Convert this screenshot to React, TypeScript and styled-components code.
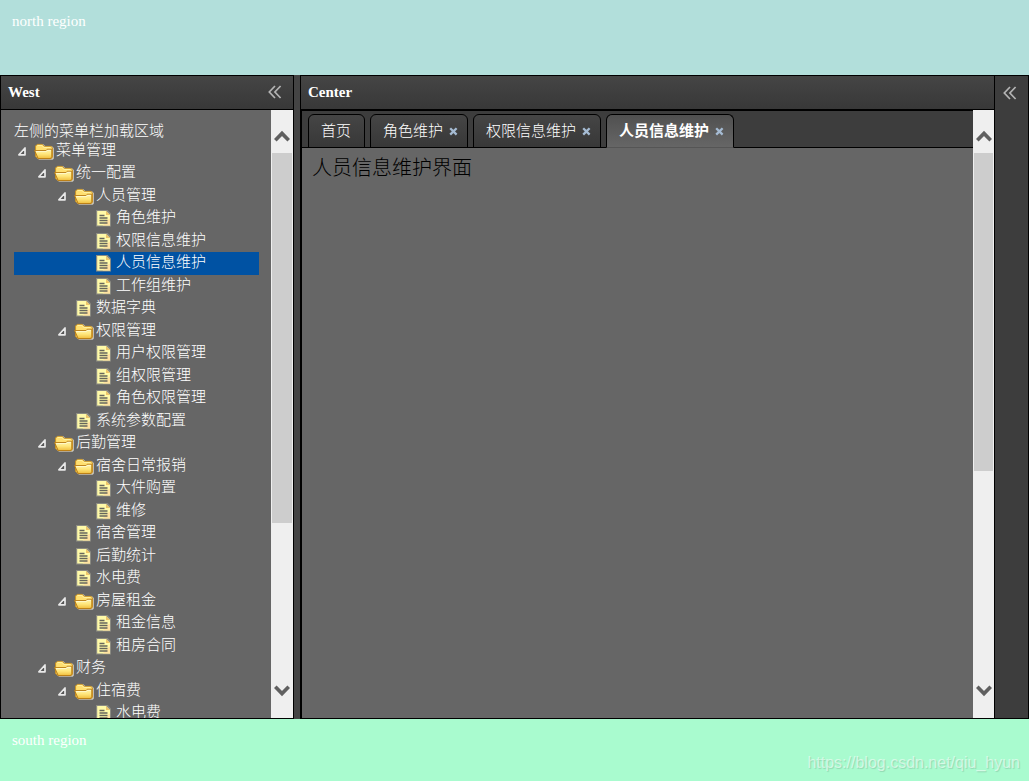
import React from "react";
import styled, { createGlobalStyle, css } from "styled-components";

const GlobalStyle = createGlobalStyle`
  * { box-sizing: border-box; }
  body {
    margin: 0;
    overflow: hidden;
    font-family: "Liberation Serif", "Noto Sans CJK SC", serif;
    font-size: 15px;
    font-weight: 300;
    color: #fff;
  }
  button {
    border: 0;
    padding: 0;
    background: none;
    font: inherit;
    color: inherit;
    cursor: pointer;
  }
`;

const Page = styled.div`
  display: grid;
  grid-template-rows: 75px minmax(0, 1fr) 62px;
  height: 100vh;
  background: #444;
`;

const North = styled.header`
  padding: 12px;
  line-height: 18px;
  background: #b2dfdb;
`;

const South = styled.footer`
  display: flex;
  justify-content: space-between;
  padding: 12px 9px 9px 12px;
  line-height: 18px;
  background: #a9fbcf;
`;

const Watermark = styled.span`
  align-self: flex-end;
  font-family: "Liberation Sans", Arial, sans-serif;
  font-size: 16px;
  color: rgba(255, 255, 255, 0.55);
  text-shadow: 1px 1px 1px rgba(0, 0, 0, 0.14);
`;

const Middle = styled.div`
  display: grid;
  grid-template-columns: 294px minmax(0, 1fr) 34px;
  min-height: 0;
`;

const Panel = styled.section`
  display: flex;
  flex-direction: column;
  min-width: 0;
  min-height: 0;
  border: 1px solid #000;
  background: #666;
`;

const CenterPanel = styled(Panel)`
  margin-left: 6px;
`;

const EastPanel = styled.aside`
  display: flex;
  justify-content: center;
  align-items: flex-start;
  padding: 10px 3px 0 0;
  border: 1px solid #000;
  border-left: 0;
  background: #3d3d3d;
`;

const PanelHeader = styled.div`
  display: flex;
  flex: none;
  align-items: center;
  justify-content: space-between;
  height: 34px;
  padding: 0 11px 1px 7px;
  border-bottom: 1px solid #000;
  background: linear-gradient(#454545, #383838);
`;

const PanelTitle = styled.h2`
  margin: 0;
  font-size: 15px;
  line-height: 20px;
`;

const ToolButton = styled.button`
  display: flex;
  width: 14px;
  height: 14px;
`;

const PanelBody = styled.div`
  display: flex;
  flex: 1;
  min-height: 0;
`;

const MenuArea = styled.nav`
  flex: 1;
  min-width: 0;
  padding: 12px 12px 0 13px;
  overflow: hidden;
`;

const MenuCaption = styled.div`
  line-height: 18px;
`;

const Tree = styled.ul`
  margin: 0;
  padding: 0;
  list-style: none;
`;

const TreeRow = styled.li<{ $level: number; $selected?: boolean }>`
  display: flex;
  align-items: flex-start;
  height: 22px;
  padding-left: ${(p) => p.$level * 20}px;
  line-height: 20px;
  white-space: nowrap;
  cursor: pointer;
  background: ${(p) => (p.$selected ? "#0052a3" : "transparent")};
  &:nth-child(even) {
    height: 23px;
  }
`;

const TreeSlot = styled.span`
  display: flex;
  flex: none;
  width: 20px;
  height: 22px;
`;

const TreeLabel = styled.span`
  padding-left: 2px;
`;

const Track = styled.div`
  display: flex;
  flex: none;
  flex-direction: column;
  width: 21px;
  background: #efefef;
`;

const WideTrack = styled(Track)`
  width: 22px;
`;

const Arrow = styled.svg`
  flex: none;
  align-self: center;
  width: 16px;
  height: 12px;
  margin: 20px 0 11px;
`;

const DownArrow = styled(Arrow)`
  margin: 11px 0 21px;
  transform: rotate(180deg);
`;

const Groove = styled.div`
  flex: 1;
  min-height: 0;
  padding: 0 1px;
`;

const Thumb = styled.div<{ $share: number }>`
  height: ${(p) => p.$share}%;
  background: #cdcdcd;
`;

const TabsPanel = styled.div`
  display: flex;
  flex: 1;
  flex-direction: column;
  min-width: 0;
  border-top: 1px solid #000;
  border-left: 1px solid #000;
`;

const TabBar = styled.div`
  display: flex;
  flex: none;
  align-items: flex-start;
  gap: 5px;
  height: 37px;
  padding: 3px 6px 0;
  border-bottom: 1px solid #000;
  background: #3d3d3d;
`;

const activeTab = css`
  font-weight: 700;
  border-bottom-color: #555;
  background: linear-gradient(#505050, #666);
`;

const Tab = styled.div<{ $active?: boolean; $closable?: boolean }>`
  display: flex;
  align-items: center;
  gap: 6px;
  height: 34px;
  padding: 0 ${(p) => (p.$closable ? 9 : 13)}px 3px 12px;
  border: 1px solid #000;
  border-radius: 6px 6px 0 0;
  white-space: nowrap;
  background: linear-gradient(#454545, #383838);
  ${(p) => p.$active && activeTab}
`;

const CloseButton = styled.button`
  display: flex;
  width: 9px;
  height: 9px;
  margin-top: 4px;
`;

const TabContent = styled.main`
  padding: 6px 10px;
  font-size: 20px;
  line-height: 28px;
  color: #000;
`;

const Collapse = () => (
  <svg width="14" height="14" viewBox="0 0 14 14" fill="none" stroke="#b4b4b4" strokeWidth="1.7" aria-hidden="true">
    <path d="M7 1 1.3 7 7 13M12.6 1 6.9 7l5.7 6" />
  </svg>
);

const Expander = () => (
  <svg width="20" height="22" viewBox="0 0 20 22" aria-hidden="true">
    <path d="M11 8v6.8H4.9z" fill="#555" stroke="#e9e9e9" strokeWidth="1.7" strokeLinejoin="round" />
  </svg>
);

const FolderIcon = () => (
  <svg width="20" height="22" viewBox="0 0 20 22" aria-hidden="true">
    <defs>
      <linearGradient id="folderFront" x1="0" y1="0" x2="0" y2="1">
        <stop offset="0" stopColor="#fff6b0" />
        <stop offset="0.5" stopColor="#ffe77c" />
        <stop offset="1" stopColor="#f0bd3c" />
      </linearGradient>
    </defs>
    <path d="M3 5.6 4.4 4.2h5l2 2h6.6l1.9 1.8v10.6l-1.2 1.2H5L3 18z" fill="#c9c4b8" />
    <path d="M1.6 6 3.2 4.4h5.2l1.8 2h6.8l1.4 1.3v9.6l-1.1 1.2H4.2l-2.6-2z" fill="#ffdf70" stroke="#c99223" strokeWidth="1" />
    <path d="M3.6 5.4h4.4l1.7 2h6.8" fill="none" stroke="#fff3a4" />
    <path d="M.6 10.6h11.3l1.3-1.3h4.6v7l-1 2.3H4.2z" fill="url(#folderFront)" stroke="#b97c15" strokeWidth="1" strokeLinejoin="round" />
    <path d="M2.1 11.6h10.2l1.3-1.3h3.1" fill="none" stroke="#fffbd0" />
  </svg>
);

const FileIcon = () => (
  <svg width="20" height="22" viewBox="0 0 20 22" aria-hidden="true">
    <path d="M2 3h11.6l3.4 3.5v13H2z" fill="#8b8b82" />
    <path d="M3.2 4h8.8l4 4v10.6H3.2z" fill="#fffaa8" />
    <path d="M13.4 13 16 11.4v7.2H8.6z" fill="#ffe2a0" />
    <path d="M12 4v4h4z" fill="#efc568" />
    <path d="M5.5 8.5h5M5.5 11h8M5.5 13.5h8M5.5 16h8" stroke="#66665c" strokeWidth="1.3" />
  </svg>
);

const CloseIcon = () => (
  <svg width="9" height="9" viewBox="0 0 9 9" aria-hidden="true">
    <path d="m1.2 1.2 6.4 6.4M7.6 1.2 1.2 7.6" stroke="#a5bbd3" strokeWidth="2.3" />
  </svg>
);

const Chevron = () => <path d="m1.3 10.2 6.7-6.8 6.7 6.8" fill="none" stroke="#606060" strokeWidth="3.6" />;

const ScrollMarks = ({ share, wide }: { share: number; wide?: boolean }) => {
  const Base = wide ? WideTrack : Track;
  return (
    <Base aria-hidden="true">
      <Arrow viewBox="0 0 16 12"><Chevron /></Arrow>
      <Groove><Thumb $share={share} /></Groove>
      <DownArrow viewBox="0 0 16 12"><Chevron /></DownArrow>
    </Base>
  );
};

type Node = { text: string; level: number; folder?: boolean };

const nodes: Node[] = [
  { text: "菜单管理", level: 0, folder: true },
  { text: "统一配置", level: 1, folder: true },
  { text: "人员管理", level: 2, folder: true },
  { text: "角色维护", level: 3 },
  { text: "权限信息维护", level: 3 },
  { text: "人员信息维护", level: 3 },
  { text: "工作组维护", level: 3 },
  { text: "数据字典", level: 2 },
  { text: "权限管理", level: 2, folder: true },
  { text: "用户权限管理", level: 3 },
  { text: "组权限管理", level: 3 },
  { text: "角色权限管理", level: 3 },
  { text: "系统参数配置", level: 2 },
  { text: "后勤管理", level: 1, folder: true },
  { text: "宿舍日常报销", level: 2, folder: true },
  { text: "大件购置", level: 3 },
  { text: "维修", level: 3 },
  { text: "宿舍管理", level: 2 },
  { text: "后勤统计", level: 2 },
  { text: "水电费", level: 2 },
  { text: "房屋租金", level: 2, folder: true },
  { text: "租金信息", level: 3 },
  { text: "租房合同", level: 3 },
  { text: "财务", level: 1, folder: true },
  { text: "住宿费", level: 2, folder: true },
  { text: "水电费", level: 3 },
];

const tabs = ["首页", "角色维护", "权限信息维护", "人员信息维护"];
const current = "人员信息维护";

export default function App() {
  return (
    <Page>
      <GlobalStyle />
      <North>north region</North>
      <Middle>
        <Panel>
          <PanelHeader>
            <PanelTitle>West</PanelTitle>
            <ToolButton aria-label="Collapse west"><Collapse /></ToolButton>
          </PanelHeader>
          <PanelBody>
            <MenuArea>
              <MenuCaption>左侧的菜单栏加载区域</MenuCaption>
              <Tree role="tree">
                {nodes.map((node, i) => (
                  <TreeRow
                    key={i}
                    role="treeitem"
                    aria-level={node.level + 1}
                    aria-expanded={node.folder}
                    aria-selected={node.text === current}
                    $level={node.level}
                    $selected={node.text === current}
                  >
                    <TreeSlot>{node.folder && <Expander />}</TreeSlot>
                    <TreeSlot>{node.folder ? <FolderIcon /> : <FileIcon />}</TreeSlot>
                    <TreeLabel>{node.text}</TreeLabel>
                  </TreeRow>
                ))}
              </Tree>
            </MenuArea>
            <ScrollMarks share={71} wide />
          </PanelBody>
        </Panel>
        <CenterPanel>
          <PanelHeader>
            <PanelTitle>Center</PanelTitle>
          </PanelHeader>
          <PanelBody>
            <TabsPanel>
              <TabBar role="tablist">
                {tabs.map((name, i) => (
                  <Tab key={name} $active={name === current} $closable={i > 0}>
                    <button role="tab" aria-selected={name === current}>{name}</button>
                    {i > 0 && <CloseButton aria-label={`Close ${name}`}><CloseIcon /></CloseButton>}
                  </Tab>
                ))}
              </TabBar>
              <TabContent>人员信息维护界面</TabContent>
            </TabsPanel>
            <ScrollMarks share={61} />
          </PanelBody>
        </CenterPanel>
        <EastPanel>
          <ToolButton aria-label="Expand east"><Collapse /></ToolButton>
        </EastPanel>
      </Middle>
      <South>
        <span>south region</span>
        <Watermark>https://blog.csdn.net/qiu_hyun</Watermark>
      </South>
    </Page>
  );
}
